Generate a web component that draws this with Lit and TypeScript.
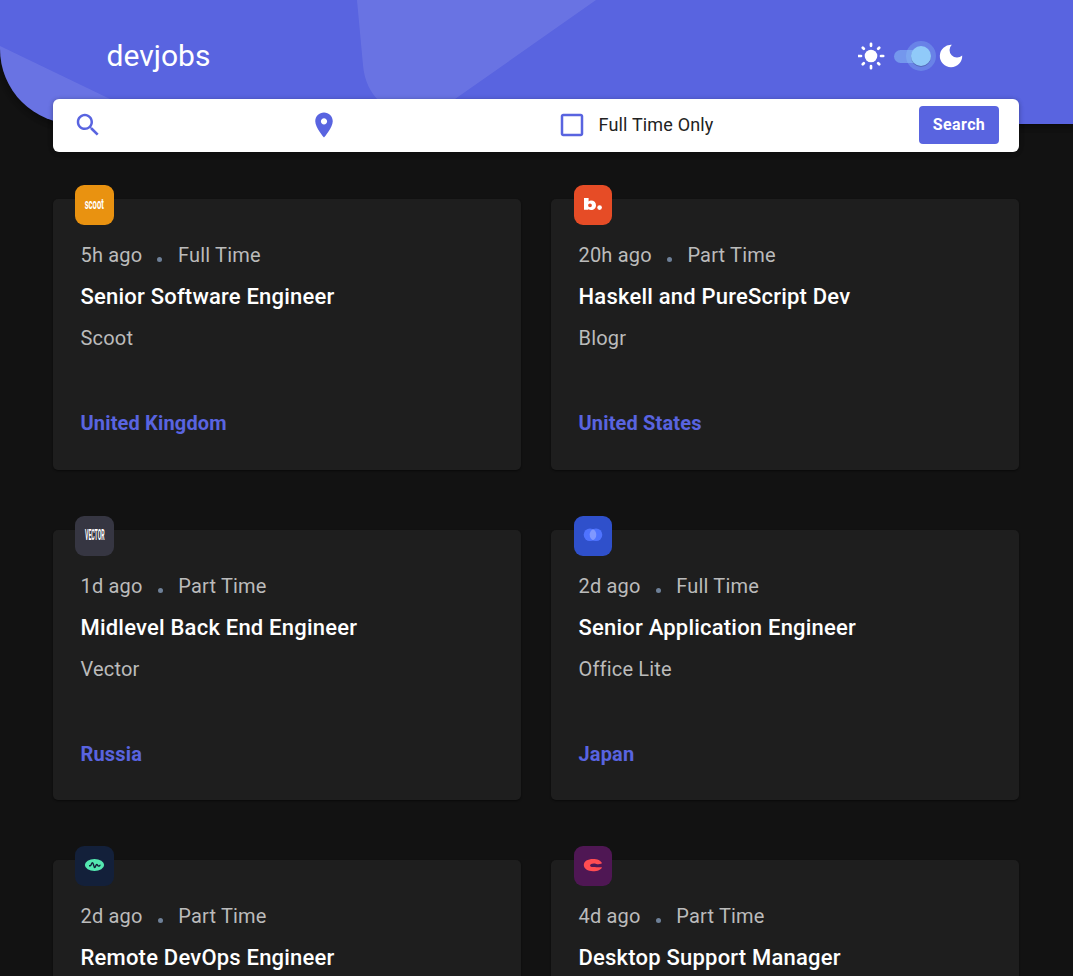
import { LitElement, html, css, svg } from "lit";
import { customElement, property } from "lit/decorators.js";

interface Job {
  logo: string;
  age: string;
  contract: string;
  title: string;
  company: string;
  country: string;
}

const JOBS: Job[] = [
  { logo: "scoot", age: "5h ago", contract: "Full Time", title: "Senior Software Engineer", company: "Scoot", country: "United Kingdom" },
  { logo: "blogr", age: "20h ago", contract: "Part Time", title: "Haskell and PureScript Dev", company: "Blogr", country: "United States" },
  { logo: "vector", age: "1d ago", contract: "Part Time", title: "Midlevel Back End Engineer", company: "Vector", country: "Russia" },
  { logo: "office", age: "2d ago", contract: "Full Time", title: "Senior Application Engineer", company: "Office Lite", country: "Japan" },
  { logo: "pod", age: "2d ago", contract: "Part Time", title: "Remote DevOps Engineer", company: "Pod", country: "Thailand" },
  { logo: "creative", age: "4d ago", contract: "Part Time", title: "Desktop Support Manager", company: "Creative", country: "Germany" },
];

const LOGOS: Record<string, unknown> = {
  scoot: svg`<text transform="translate(9.700 24.300) scale(.51 1)" font-size="15" font-weight="700" fill="#fff">scoot</text>`,
  blogr: svg`<path fill="#fff" fill-rule="evenodd" d="M10 13h4.600v3.400c.7-.6 1.500-.8 2.500-.8 2.900 0 4.900 1.900 4.900 4.700s-2 4.800-4.900 4.800c-1.100 0-2-.3-2.700-1v.7H10zM16 18.400a1.800 1.800 0 1 0 0 3.800 1.800 1.800 0 0 0 0-3.800z"/><circle cx="25.600" cy="22.600" r="2.300" fill="#fff"/>`,
  vector: svg`<text transform="translate(10 24.300) scale(.345 1)" font-size="15" font-weight="700" fill="#fff">VECTOR</text>`,
  office: svg`<circle cx="16" cy="18.700" r="6.300" fill="#4f73ff"/><circle cx="22" cy="18.700" r="6.300" fill="#4f73ff"/><path fill="#8098ff" d="M19 13.160a6.300 6.300 0 0 1 0 11.080 6.300 6.300 0 0 1 0-11.080z"/>`,
  pod: svg`<ellipse cx="19.500" cy="19" rx="9.600" ry="6.100" fill="#54e8b0"/><path d="M14 19.800h1.300c1 0 1.100-3 2.200-3s1.200 4.700 2.200 4.700 1-3 2-3 .9 1.600 1.900 1.600 .9-.9 1.900-.9" fill="none" stroke="#13203a" stroke-width="1.400"/>`,
  creative: svg`<path fill="#ff4c52" d="M28 17.200C27 14.500 23.300 13 19 13c-5.300 0-9.200 2.300-9.200 6.100 0 3.700 3.900 6.100 9.200 6.100 4.600 0 8.200-1.500 9-4h-6.400v-.3h-3.800c-1 0-1.700-.5-1.700-1.300 0-1.100 1.500-2 3.700-2 1.600 0 2.200.7 3.400.7 2 0 3.300-.4 4.800-1.100z"/>`,
};

@customElement("job-card")
export class JobCard extends LitElement {
  @property({ attribute: false }) job!: Job;

  static styles = css`
    :host { display: block; }
    .card {
      position: relative;
      box-sizing: border-box;
      height: 270.600px;
      padding: 39px 27.500px 0;
      border-radius: 5px;
      background: #1e1e1e;
      box-shadow: 0 1px 2px rgba(0, 0, 0, 0.3), 0 1px 1px rgba(0, 0, 0, 0.15);
      color: #fff;
    }
    .logo {
      position: absolute;
      top: -14px;
      left: 22px;
      width: 39px;
      height: 40px;
      border-radius: 9px;
      overflow: hidden;
    }
    .logo svg { display: block; width: 39px; height: 40px; font-family: Roboto, sans-serif; }
    .scoot { background: #e99210; }
    .blogr { background: #e64c26; }
    .vector { background: #363642; }
    .office { background: #2f50cb; }
    .pod { background: #13203a; }
    .creative { background: #4f1754; }
    .even .logo { left: 23px; width: 38px; }
    .meta, .company { color: #bbb; font-size: 20px; line-height: 34px; letter-spacing: 0.180px; }
    .meta { display: flex; }
    .dot { width: 5px; height: 5px; margin: 19px 15.700px 0 15px; border-radius: 50%; background: #6e8098; }
    .title { font-size: 22px; line-height: 33px; font-weight: 500; margin-top: 8px; letter-spacing: 0.210px; }
    .company { margin-top: 8px; }
    .country { margin-top: 51px; color: #5964e0; font-size: 20px; line-height: 34px; font-weight: 700; letter-spacing: 0.160px; }
  `;

  render() {
    const j = this.job;
    const even = ["blogr", "office", "creative"].includes(j.logo);
    return html`
      <article class="card ${even ? "even" : ""}">
        <div class="logo ${j.logo}"><svg viewBox="0 0 39 40">${LOGOS[j.logo]}</svg></div>
        <div class="meta"><span>${j.age}</span><span class="dot"></span><span>${j.contract}</span></div>
        <div class="title">${j.title}</div>
        <div class="company">${j.company}</div>
        <div class="country">${j.country}</div>
      </article>
    `;
  }
}

@customElement("app-root")
export class AppRoot extends LitElement {
  static styles = css`
    :host {
      display: block;
      height: 976px;
      overflow: hidden;
      background: #121212;
      font-family: Roboto, sans-serif;
    }
    .header {
      position: relative;
      box-sizing: border-box;
      height: 124px;
      padding: 0 109px 12px 106.500px;
      display: flex;
      align-items: center;
      justify-content: space-between;
      overflow: hidden;
      border-bottom-left-radius: 75px;
      background: #5964e0;
      box-shadow: 0 2px 4px -1px rgba(0, 0, 0, 0.2), 0 4px 5px rgba(0, 0, 0, 0.14), 0 1px 10px rgba(0, 0, 0, 0.12);
    }
    .pattern { position: absolute; inset: 0; width: 100%; height: 124px; }
    .brand { position: relative; color: #fff; font-size: 30px; line-height: 40px; letter-spacing: 0.030px; }
    .theme { position: relative; display: flex; align-items: center; }
    .theme svg { display: block; }
    .search {
      position: relative;
      box-sizing: border-box;
      height: 53px;
      margin: -25px 54px 0 53px;
      padding: 0 20px 2px 20px;
      display: grid;
      grid-template-columns: 238px 246px 1fr auto;
      align-items: center;
      border-radius: 6px;
      background: #fff;
      box-shadow: 0 1px 4px rgba(0, 0, 0, 0.25), 0 1px 6px rgba(0, 0, 0, 0.1);
    }
    .search svg { display: block; }
    .check { display: flex; align-items: center; gap: 11.500px; font-size: 18px; letter-spacing: 0.169px; color: #222; }
    .button {
      width: 80px;
      height: 38px;
      padding: 0;
      border: 0;
      border-radius: 4px;
      background: #5964e0;
      color: #fff;
      font: 700 16px Roboto, sans-serif;
      letter-spacing: 0.400px;
    }
    .jobs {
      display: grid;
      grid-template-columns: 468px 468px;
      gap: 60px 30px;
      margin: 47px 0 0 53px;
    }
  `;

  render() {
    return html`
      <header class="header">
        <svg class="pattern" viewBox="0 0 1073 124" preserveAspectRatio="none">
          <path d="M0 46L162 124H0z" fill="#fff" fill-opacity=".1" />
          <path d="M357 0L363 65Q365 88 380 102Q395 115 425 116Q437 112 455 99L596 0z" fill="#fff" fill-opacity=".1" />
        </svg>
        <div class="brand">devjobs</div>
        <div class="theme">
          <svg width="106" height="32" viewBox="0 0 106 32">
            <circle cx="13" cy="16" r="6.300" fill="#fff" />
            <path d="M13 3.800v2M13 26.200v2M.8 16h2.200M23 16h2.200M4.800 7.800l1 1M20.200 23.200l1 1M21.200 7.800l-1 1M5.800 23.200l-1 1" fill="none" stroke="#fff" stroke-width="2.700" stroke-linecap="round" />
            <rect x="36" y="10" width="37" height="13" rx="6.500" fill="#90caf9" fill-opacity=".5" />
            <circle cx="63" cy="16" r="15" fill="#90caf9" fill-opacity=".3" />
            <circle cx="63" cy="17" r="10" fill="#000" fill-opacity=".2" />
            <circle cx="63" cy="16" r="10" fill="#90caf9" />
            <path d="M93.800 4.800A11.200 11.200 0 1 0 104.200 15.500A7.300 7.300 0 0 1 93.800 4.800z" fill="#fff" />
          </svg>
        </div>
      </header>
      <form class="search">
        <svg width="30" height="30" viewBox="0 0 24 24" fill="#5964e0"><path d="M15.500 14h-.79l-.28-.27C15.410 12.590 16 11.110 16 9.500 16 5.910 13.090 3 9.500 3S3 5.910 3 9.500 5.910 16 9.500 16c1.610 0 3.090-.59 4.230-1.570l.27.28v.79l5 4.990L20.490 19l-4.990-5zm-6 0C7.010 14 5 11.990 5 9.500S7.010 5 9.500 5 14 7.010 14 9.500 11.990 14 9.500 14z" /></svg>
        <svg width="26" height="30" viewBox="2 0 20 24" fill="#5964e0"><path d="M12 2C8.130 2 5 5.130 5 9c0 5.250 7 13 7 13s7-7.750 7-13c0-3.870-3.130-7-7-7zm0 9.500c-1.380 0-2.500-1.120-2.500-2.500s1.120-2.500 2.500-2.500 2.500 1.120 2.500 2.500-1.120 2.500-2.500 2.500z" /></svg>
        <label class="check">
          <svg width="30" height="30" viewBox="0 0 24 24" fill="#5964e0"><path d="M19 5v14H5V5h14m0-2H5c-1.100 0-2 .9-2 2v14c0 1.100.9 2 2 2h14c1.100 0 2-.9 2-2V5c0-1.100-.9-2-2-2z" /></svg>
          <span>Full Time Only</span>
        </label>
        <button class="button" type="button">Search</button>
      </form>
      <main class="jobs">${JOBS.map((job) => html`<job-card .job=${job}></job-card>`)}</main>
    `;
  }
}
